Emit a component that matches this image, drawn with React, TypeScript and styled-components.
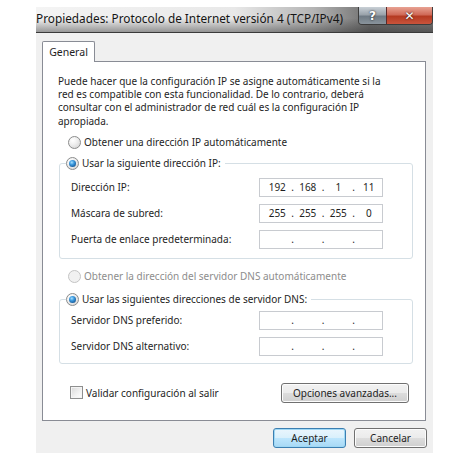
import React from "react";
import styled, { createGlobalStyle } from "styled-components";

const Global = createGlobalStyle`
  html, body {
    margin: 0;
    padding: 0;
    background: #ffffff;
  }
  body {
    font-family: "Noto Sans", "Open Sans", sans-serif;
    font-size: 10px;
    color: #1e1e1e;
  }
`;

const Page = styled.div`
  width: 464px;
  height: 464px;
  padding: 7px 0 0 36px;
  box-sizing: border-box;
`;

const Window = styled.div`
  width: 397px;
  height: 446px;
  background: #f0f0f0;
  display: flex;
  flex-direction: column;
`;

const TitleBar = styled.div`
  height: 25px;
  border-bottom: 1px solid #3a3a3a;
  display: flex;
  align-items: flex-start;
  justify-content: space-between;
  background: linear-gradient(to bottom, rgba(255, 255, 255, 0) 45%, rgba(40, 40, 40, 0.45) 100%),
    linear-gradient(to right, #f4f4f4 0%, #e8e8e8 50%, #b4b4b4 70%, #6f6f6f 84%, #7a7a7a 100%);
`;

const Title = styled.span`
  font-size: 11.8px;
  line-height: 23px;
  color: #151515;
  white-space: nowrap;
`;

const Caption = styled.div`
  display: flex;
  border: 1px solid #3c3c3c;
  border-top: none;
  border-radius: 0 0 4px 4px;
  overflow: hidden;
  height: 17px;
`;

const CapButton = styled.div<{ $close?: boolean }>`
  width: ${(p) => (p.$close ? "45px" : "27px")};
  display: flex;
  align-items: center;
  justify-content: center;
  color: #ffffff;
  font-family: "DejaVu Sans", sans-serif;
  font-weight: bold;
  font-size: 12px;
  text-shadow: 0 0 2px #000;
  border-left: ${(p) => (p.$close ? "1px solid #5a2a2a" : "none")};
  background: ${(p) =>
    p.$close
      ? "linear-gradient(to bottom, #e8a293 0%, #d06a58 45%, #b53a22 55%, #c9543c 100%)"
      : "linear-gradient(to bottom, #c9d0d6 0%, #9aa3ab 45%, #6f7a84 55%, #8a949c 100%)"};
`;

const Body = styled.div`
  flex: 1;
  display: flex;
  flex-direction: column;
  padding: 8px 6px 5px 6px;
`;

const TabStrip = styled.div`
  display: flex;
`;

const Tab = styled.div`
  width: 51px;
  height: 20px;
  border: 1px solid #898c95;
  border-bottom: none;
  border-radius: 2px 2px 0 0;
  background: #ffffff;
  margin-bottom: -1px;
  position: relative;
  z-index: 1;
  display: flex;
  align-items: center;
  justify-content: center;
  font-size: 10.5px;
`;

const Panel = styled.div`
  margin-right: 1px;
  border: 1px solid #898c95;
  background: #ffffff;
  padding: 13px 12px 17px 15px;
  display: flex;
  flex-direction: column;
  white-space: nowrap;
`;

const Description = styled.p`
  margin: 0;
  line-height: 13.2px;
`;

const RadioRow = styled.label<{ $disabled?: boolean }>`
  display: flex;
  align-items: center;
  gap: 3px;
  height: 15px;
  line-height: 15px;
  color: ${(p) => (p.$disabled ? "#8d8d8d" : "#1e1e1e")};
`;

const Radio = styled.span<{ $checked?: boolean; $disabled?: boolean }>`
  width: 11px;
  height: 11px;
  border-radius: 50%;
  border: 1px solid ${(p) => (p.$disabled ? "#c4c4c4" : "#8b8c8c")};
  background: ${(p) =>
    p.$disabled
      ? "#f1f1f1"
      : "radial-gradient(circle at 35% 30%, #ffffff 0%, #f0f0f0 40%, #cfcfcf 100%)"};
  position: relative;
  flex: none;
  &::after {
    content: "";
    display: ${(p) => (p.$checked ? "block" : "none")};
    position: absolute;
    inset: 2px;
    border-radius: 50%;
    background: radial-gradient(circle at 40% 35%, #a6e0ff 0%, #3d9be0 35%, #0f4f8c 85%);
  }
`;

const FreeRadio = styled(RadioRow)<{ $top: number }>`
  margin: ${(p) => p.$top}px 0 0 10px;
`;

const Group = styled.fieldset<{ $top: number; $fieldsTop?: number }>`
  margin: ${(p) => p.$top}px 0 0 1px;
  padding: 0 0 ${(p) => (p.$fieldsTop ? 7 : 9)}px 11px;
  border: 1px solid #d5dfe5;
  border-radius: 3px;
  min-width: 0;
`;

const Legend = styled.legend`
  margin-left: -5px;
  padding: 0 4px 0 0;
`;

const Fields = styled.div<{ $top: number }>`
  margin-top: ${(p) => p.$top}px;
  display: flex;
  flex-direction: column;
  gap: 7px;
`;

const FieldRow = styled.div`
  display: flex;
  align-items: center;
  justify-content: space-between;
  padding-right: 29px;
`;

const IpBox = styled.div`
  width: 118px;
  height: 17px;
  border: 1px solid #c8cbd0;
  background: #ffffff;
  display: flex;
  align-items: center;
  padding-left: 4px;
`;

const Octet = styled.span`
  flex: 1;
  text-align: center;
`;

const Dot = styled.span`
  width: 4px;
  text-align: center;
`;

const Footer = styled.div`
  margin-top: 19px;
  padding-right: 4px;
  display: flex;
  align-items: center;
  justify-content: space-between;
`;

const CheckRow = styled.label`
  margin-left: 12px;
  display: flex;
  align-items: center;
  gap: 3px;
`;

const Check = styled.span`
  width: 11px;
  height: 11px;
  border: 1px solid #8e8f8f;
  background: linear-gradient(135deg, #d8d8d8 0%, #f2f2f2 60%, #ffffff 100%);
  box-shadow: inset 0 0 0 1px #f4f4f4;
`;

const Button = styled.button<{ $primary?: boolean; $w: number; $h?: number }>`
  width: ${(p) => p.$w}px;
  height: ${(p) => p.$h ?? 20}px;
  padding: 0;
  font: inherit;
  color: #1e1e1e;
  border-radius: 3px;
  border: 1px solid ${(p) => (p.$primary ? "#3c7fb1" : "#707070")};
  box-shadow: inset 0 0 0 1px ${(p) => (p.$primary ? "#9fd8f5" : "#fcfcfc")};
  background: ${(p) =>
    p.$primary
      ? "linear-gradient(to bottom, #eaf6fd 0%, #d9f0fc 50%, #bee6fd 50%, #a7d9f5 100%)"
      : "linear-gradient(to bottom, #f2f2f2 0%, #ebebeb 50%, #dddddd 50%, #cfcfcf 100%)"};
`;

const Actions = styled.div`
  margin-top: 7px;
  display: flex;
  justify-content: flex-end;
  gap: 8px;
`;

const Ip = ({ value }: { value?: string[] }) => {
  const v = value ?? ["", "", "", ""];
  return (
    <IpBox>
      <Octet>{v[0]}</Octet>
      <Dot>.</Dot>
      <Octet>{v[1]}</Octet>
      <Dot>.</Dot>
      <Octet>{v[2]}</Octet>
      <Dot>.</Dot>
      <Octet>{v[3]}</Octet>
    </IpBox>
  );
};

export default function App() {
  return (
    <Page>
      <Global />
      <Window>
        <TitleBar>
          <Title>Propiedades: Protocolo de Internet versión 4 (TCP/IPv4)</Title>
          <Caption>
            <CapButton>?</CapButton>
            <CapButton $close>✕</CapButton>
          </Caption>
        </TitleBar>
        <Body>
          <TabStrip>
            <Tab>General</Tab>
          </TabStrip>
          <Panel>
            <Description>
              Puede hacer que la configuración IP se asigne automáticamente si la
              <br />
              red es compatible con esta funcionalidad. De lo contrario, deberá
              <br />
              consultar con el administrador de red cuál es la configuración IP
              <br />
              apropiada.
            </Description>
            <FreeRadio $top={7}>
              <Radio />
              Obtener una dirección IP automáticamente
            </FreeRadio>
            <Group $top={6}>
              <Legend>
                <RadioRow>
                  <Radio $checked />
                  Usar la siguiente dirección IP:
                </RadioRow>
              </Legend>
              <Fields $top={7}>
                <FieldRow>
                  <span>Dirección IP:</span>
                  <Ip value={["192", "168", "1", "11"]} />
                </FieldRow>
                <FieldRow>
                  <span>Máscara de subred:</span>
                  <Ip value={["255", "255", "255", "0"]} />
                </FieldRow>
                <FieldRow>
                  <span>Puerta de enlace predeterminada:</span>
                  <Ip />
                </FieldRow>
              </Fields>
            </Group>
            <FreeRadio $disabled $top={10}>
              <Radio $disabled />
              Obtener la dirección del servidor DNS automáticamente
            </FreeRadio>
            <Group $top={8} $fieldsTop={4}>
              <Legend>
                <RadioRow>
                  <Radio $checked />
                  Usar las siguientes direcciones de servidor DNS:
                </RadioRow>
              </Legend>
              <Fields $top={4}>
                <FieldRow>
                  <span>Servidor DNS preferido:</span>
                  <Ip />
                </FieldRow>
                <FieldRow>
                  <span>Servidor DNS alternativo:</span>
                  <Ip />
                </FieldRow>
              </Fields>
            </Group>
            <Footer>
              <CheckRow>
                <Check />
                Validar configuración al salir
              </CheckRow>
              <Button $w={128}>Opciones avanzadas...</Button>
            </Footer>
          </Panel>
          <Actions>
            <Button $primary $w={73}>
              Aceptar
            </Button>
            <Button $w={73}>Cancelar</Button>
          </Actions>
        </Body>
      </Window>
    </Page>
  );
}
